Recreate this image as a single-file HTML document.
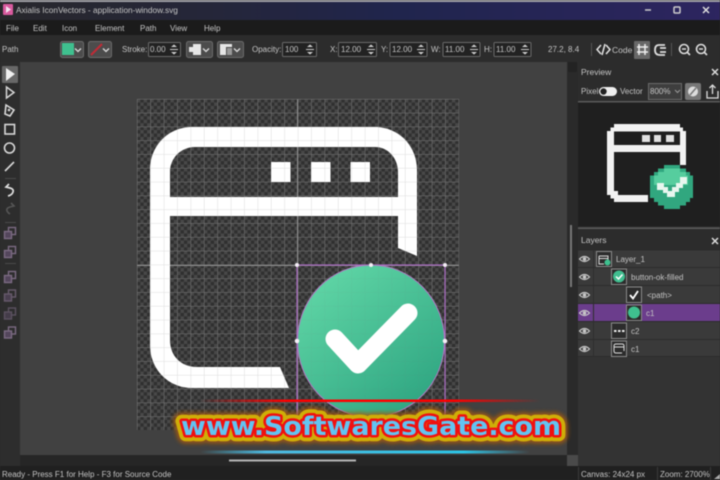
<!DOCTYPE html>
<html lang="en"><head><meta charset="utf-8"><title>Axialis IconVectors</title>
<style>
html,body{margin:0;padding:0;width:720px;height:480px;overflow:hidden;background:#2b2b2b}
svg{display:block;filter:blur(.5px)}
text{font-family:"Liberation Sans",sans-serif;font-size:8px;fill:#c4c4c4}
.sp{fill:#222;stroke:#6a6a6a;stroke-width:1}
.btn{fill:#4c4c4c;stroke:#6a6a6a}
.ic{fill:none;stroke:#d8d8d8;stroke-width:1.6}
.rowb{fill:#3a3a3a}
.sep{stroke:#555;stroke-width:1}
.th{fill:#2c2c2c;stroke:#8a8a8a}
</style></head><body>
<svg width="720" height="480" viewBox="0 0 720 480" xmlns="http://www.w3.org/2000/svg">
<defs>
<linearGradient id="tg" x1="0" x2="1" y1="0" y2="0"><stop offset="0" stop-color="#28282c"/><stop offset=".3" stop-color="#25263a"/><stop offset=".55" stop-color="#20254d"/><stop offset="1" stop-color="#2d2560"/></linearGradient>
<linearGradient id="cg" x1="0.15" y1="0.05" x2="0.85" y2="0.95"><stop offset="0" stop-color="#60d6a6"/><stop offset="1" stop-color="#2ea581"/></linearGradient>
<linearGradient id="redl" x1="0" x2="1" y1="0" y2="0"><stop offset="0" stop-color="#f00" stop-opacity="0"/><stop offset=".25" stop-color="#f00"/><stop offset=".75" stop-color="#f00"/><stop offset="1" stop-color="#f00" stop-opacity="0"/></linearGradient>
<linearGradient id="cyl" x1="0" x2="1" y1="0" y2="0"><stop offset="0" stop-color="#3bc4ea" stop-opacity="0"/><stop offset=".2" stop-color="#4fb9e0"/><stop offset=".8" stop-color="#2cc5e6"/><stop offset="1" stop-color="#3bc4ea" stop-opacity="0"/></linearGradient>
<pattern id="chk" x="137" y="99" width="6.7" height="6.9" patternUnits="userSpaceOnUse">
<rect width="6.7" height="6.9" fill="#303030"/><rect width="3.35" height="3.45" fill="#484848"/><rect x="3.35" y="3.45" width="3.35" height="3.45" fill="#484848"/></pattern>
<pattern id="grid" x="137" y="99" width="13.4" height="13.8" patternUnits="userSpaceOnUse">
<path d="M0 0H13.4M0 0V13.8" fill="none" stroke="#747474" stroke-width="1"/></pattern>
<g id="spin"><path d="M-3 -2.5L0 -5L3 -2.5ZM-3 2.5L0 5L3 2.5Z" fill="#d0d0d0"/><path d="M-4 0H4" stroke="#ccc"/></g>
<g id="eye"><path d="M-5 0Q0 -5 5 0Q0 5 -5 0Z" fill="none" stroke="#c8c8c8" stroke-width="1.2"/><circle r="1.8" fill="#c8c8c8"/></g>
<g id="overlap"><rect x="-1" y="-5" width="7" height="7" fill="none" stroke="#7b6a82" stroke-width="1.4"/><rect x="-5" y="-1" width="7" height="7" fill="#54465c" stroke="#7b6a82" stroke-width="1.4"/></g>
<g id="chev"><path d="M-3 -1.5L0 1.5L3 -1.5" fill="none" stroke="#ddd" stroke-width="1.3"/></g>
<filter id="glow" x="-5%" y="-40%" width="110%" height="180%"><feGaussianBlur stdDeviation="2"/></filter>
</defs>

<rect width="720" height="480" fill="#2b2b2b"/>
<!-- title -->
<rect width="720" height="2" fill="#a0a0a6"/>
<rect y="2" width="720" height="18" fill="url(#tg)"/>
<rect x="3" y="4" width="10" height="11" rx="1" fill="#d85a9e"/><path d="M6 6L11 9.5L6 13Z" fill="#f4e4f0"/>
<text x="16" y="13" style="font-size:8.3px">Axialis IconVectors - application-window.svg</text>
<path d="M645 10H651" stroke="#ccc" stroke-width="1.5"/>
<rect x="674" y="7" width="6" height="6" rx="1" fill="none" stroke="#ccc" stroke-width="1.5"/>
<path d="M703 7L709 13M709 7L703 13" stroke="#ddd" stroke-width="1.5"/>
<!-- menu -->
<rect y="20" width="720" height="15" fill="#1b1b1b"/>
<g style="fill:#b5b5b5">
<text x="6" y="31">File</text><text x="33" y="31">Edit</text><text x="62" y="31">Icon</text><text x="95" y="31">Element</text><text x="140" y="31">Path</text><text x="170" y="31">View</text><text x="204" y="31">Help</text>
</g>
<!-- toolbar -->
<rect y="35" width="720" height="27" fill="#2c2c2c"/>
<text x="2" y="52">Path</text>
<rect x="60.500" y="41.500" width="23" height="16" rx="2" class="btn"/><rect x="62" y="43" width="12" height="12" fill="#3fc08f"/><use href="#chev" x="78" y="50"/>
<rect x="88.500" y="41.500" width="23" height="16" rx="2" class="btn"/><path d="M91 55L102 44" stroke="#c22a35" stroke-width="2"/><use href="#chev" x="106" y="50"/>
<text x="122" y="52">Stroke:</text>
<rect x="148.500" y="42.500" width="32" height="14" rx="1" class="sp"/><text x="150" y="52">0.00</text><use href="#spin" x="174" y="49.500"/>
<rect x="186.500" y="41.500" width="26" height="16" rx="2" class="btn"/><path d="M189 47H193V52H189ZM193 44H201V55H193Z" fill="#e6e6e6"/><use href="#chev" x="206" y="50"/>
<rect x="217.500" y="41.500" width="26" height="16" rx="2" class="btn"/><path d="M220 44H232V47H226V55H220Z" fill="#e6e6e6"/><rect x="227" y="48" width="5" height="7" fill="#999"/><use href="#chev" x="237" y="50"/>
<text x="252" y="52">Opacity:</text>
<rect x="282.500" y="42.500" width="34" height="14" rx="1" class="sp"/><text x="285" y="52">100</text><use href="#spin" x="310" y="49.500"/>
<text x="330" y="52">X:</text>
<rect x="338.500" y="42.500" width="38" height="14" rx="1" class="sp"/><text x="341" y="52">12.00</text><use href="#spin" x="371" y="49.500"/>
<text x="381" y="52">Y:</text>
<rect x="390" y="42.500" width="37" height="14" rx="1" class="sp"/><text x="392" y="52">12.00</text><use href="#spin" x="421" y="49.500"/>
<text x="431" y="52">W:</text>
<rect x="443" y="42.500" width="37" height="14" rx="1" class="sp"/><text x="445" y="52">11.00</text><use href="#spin" x="474" y="49.500"/>
<text x="484" y="52">H:</text>
<rect x="494" y="42.500" width="37" height="14" rx="1" class="sp"/><text x="496" y="52">11.00</text><use href="#spin" x="525" y="49.500"/>
<text x="548" y="52">27.2, 8.4</text>
<path d="M591.500 43V56M671.500 43V56" class="sep"/>
<path d="M601 45L597 49.500L601 54M606 45L610 49.500L606 54M605 44L602 55" fill="none" stroke="#e4e4e4" stroke-width="1.5"/>
<text x="612" y="53" style="font-size:8.5px">Code</text>
<rect x="634" y="41" width="16" height="18" rx="1" fill="#686868"/>
<path d="M639 44V55M645 44V55M637 47H648M637 52H648" stroke="#eee" stroke-width="1.5"/>
<path d="M665 45H659Q655 45 655 50Q655 55 660 55H665M660 48H666M660 52H666" fill="none" stroke="#ddd" stroke-width="1.8"/>
<circle cx="684" cy="49" r="4.500" fill="none" stroke="#ddd" stroke-width="1.6"/><path d="M682 49H686M687.500 52.500L690 55" stroke="#ddd" stroke-width="1.6"/>
<circle cx="701" cy="49" r="4.500" fill="none" stroke="#ddd" stroke-width="1.6"/><path d="M699 49H703M704.500 52.500L707 55" stroke="#ddd" stroke-width="1.6"/>

<!-- left tools -->
<rect y="62" width="20" height="405" fill="#2d2d2d"/>
<rect x="2" y="66" width="16" height="17" rx="1" fill="#686868"/>
<path d="M6 68L15 74L6 81Z" fill="#f0f0f0"/>
<path d="M6.500 87L14 92.500L6.500 98Z" fill="none" stroke="#d8d8d8" stroke-width="1.5"/>
<path d="M6 105L14 110L10 116L5 114Z" class="ic"/><circle cx="9" cy="110" r="1.300" fill="#d8d8d8"/>
<rect x="5" y="124.500" width="9.500" height="9.500" class="ic"/>
<circle cx="9.500" cy="148" r="5" class="ic"/>
<path d="M5 171L14 162" class="ic"/>
<path d="M5 178.500H16" stroke="#4a4a4a"/>
<path d="M9 184L6 187L10 188Q14 189 13 192Q12 195 8 196" fill="none" stroke="#e0e0e0" stroke-width="1.7"/>
<path d="M11 203L14 206L10 207Q6 208 7 211Q8 213 10 214" fill="none" stroke="#555" stroke-width="1.6"/>
<path d="M5 222.500H16" stroke="#4a4a4a"/>
<use href="#overlap" x="9.500" y="232.500"/><use href="#overlap" x="9.500" y="251.500"/>
<path d="M5 263.500H16" stroke="#4a4a4a"/>
<use href="#overlap" x="9.500" y="276.500"/><g opacity=".75"><use href="#overlap" x="9.500" y="295"/></g><g opacity=".6"><use href="#overlap" x="9.500" y="313"/></g><use href="#overlap" x="9.500" y="332"/>

<!-- canvas -->
<rect x="20" y="62" width="547" height="393" fill="#414141"/>
<rect x="567" y="62" width="11" height="405" fill="#2a2a2a"/>
<rect x="568" y="62" width="9" height="10" fill="#232323"/>
<rect x="570" y="225" width="2" height="62" fill="#777"/>
<rect x="567" y="455" width="11" height="11" fill="#4a4a4a"/>
<rect x="137" y="99" width="322" height="331" fill="url(#chk)"/>
<rect x="137" y="99" width="322" height="331" fill="url(#grid)"/>
<path d="M297.500 99V430M137 265.500H459" stroke="#8e8e8e"/>
<path fill="#fff" fill-rule="evenodd" d="M192 127H375C399 127 417 146 417 170V256L398 248V216H170V340C170 356 181 367 197 367H280L289 388H192C168 388 150 369 150 345V170C150 146 168 127 192 127ZM170 197H398V172C398 158 388 147 375 147H195C181 147 170 158 170 172Z"/>
<rect x="271" y="162" width="19.500" height="20" fill="#fff"/><rect x="311" y="162" width="19.500" height="20" fill="#fff"/><rect x="350.500" y="162" width="19.500" height="20" fill="#fff"/>
<rect x="137" y="99" width="322" height="331" fill="url(#grid)" opacity=".25"/>
<ellipse cx="371" cy="341" rx="73.500" ry="76" fill="url(#cg)"/>
<rect x="297" y="265" width="148" height="152" fill="url(#grid)" opacity=".1"/>
<path d="M335 339L358 364L408 313" fill="none" stroke="#fff" stroke-width="19" stroke-linecap="round" stroke-linejoin="round"/>
<rect x="297" y="265" width="148" height="165" fill="none" stroke="#a868c0" stroke-width="1.200"/>
<ellipse cx="371" cy="341" rx="73.500" ry="76" fill="none" stroke="#b07ac4" stroke-width="1"/>
<g fill="#f4eef6"><circle cx="297" cy="265" r="2"/><circle cx="371" cy="265" r="2"/><circle cx="445" cy="265" r="2"/><circle cx="297" cy="341" r="2.300"/><circle cx="445" cy="341" r="2.300"/></g>

<!-- scroll strip -->
<rect x="20" y="455" width="547" height="11" fill="#262626"/>
<rect x="229" y="459.500" width="127" height="2" fill="#b4b4b4"/>

<!-- preview panel -->
<rect x="578" y="62" width="142" height="405" fill="#333"/>
<rect x="578" y="62" width="142" height="40" fill="#2c2c2c"/>
<text x="581" y="75" style="font-size:8.5px">Preview</text>
<path d="M712 69L718 75M718 69L712 75" stroke="#ddd" stroke-width="1.5"/>
<text x="581" y="94">Pixel</text>
<rect x="599" y="87" width="18" height="9" rx="4.500" fill="#eee"/><circle cx="603.500" cy="91.500" r="3.200" fill="#222"/>
<text x="620" y="94">Vector</text>
<rect x="648.500" y="83.500" width="33" height="16" fill="#3e3e3e" stroke="#6a6a6a"/><text x="650" y="94" fill="#ccc">800%</text><path d="M675 90L677.500 92.500L680 90" fill="none" stroke="#999"/>
<rect x="685" y="83" width="16" height="17" rx="2" fill="#777"/><circle cx="693" cy="91.500" r="5" fill="#ddd"/><path d="M690 95L696 88" stroke="#777" stroke-width="1.500"/>
<path d="M707 91V98H718V91M712.500 94V85M709.500 88L712.500 85L715.500 88" fill="none" stroke="#ddd" stroke-width="1.300"/>
<rect x="578" y="101" width="142" height="1.500" fill="#5a5a5a"/>
<rect x="578" y="102.500" width="142" height="124" fill="#1f1f1f"/>
<g shape-rendering="crispEdges">
<path fill="#f2f2f2" d="M614 124H680V127.500H683V131H686V165H680V152H614V191H618V195H648V202H614V198.500H610.500V195H607V131H610.500V127.500H614ZM614 131.500V145H680V131.500Z" fill-rule="evenodd"/>
<rect x="642" y="135" width="8" height="7" fill="#e0e0e0"/><rect x="654" y="135" width="7" height="7" fill="#e0e0e0"/><rect x="666" y="135" width="8" height="7" fill="#e0e0e0"/>
<path fill="#31a77f" d="M664 165H680V168.500H686V172H690V175.500H693V198H690V202H686V205.500H680V209H664V205.500H658V202H654V198H650V175.500H654V172H658V168.500H664Z"/>
<path fill="#56cd9e" d="M664 168.500H680V172H686V175.500H688V185H654V175.500H658V172H664Z"/>
<path fill="#e8f6ef" d="M657 183H664V187H668V191H672V187H676V183H680V177H687V184H683V188H679V192H675V197H667V193H663V190H657Z"/>
</g>
<rect x="578" y="227.500" width="142" height="1.500" fill="#5a5a5a"/>

<!-- layers -->
<rect x="578" y="229" width="142" height="21" fill="#2c2c2c"/>
<text x="581" y="243" style="font-size:8.500px">Layers</text>
<path d="M712 238L718 244M718 238L712 244" stroke="#ddd" stroke-width="1.500"/>
<rect x="578" y="250" width="142" height="107" class="rowb"/>
<rect x="578" y="304" width="142" height="18" fill="#6b3d8c"/>
<path d="M578 267.500H720M578 285.500H720M578 303.500H720M578 321.500H720M578 339.500H720M578 356.500H720M578 250H720" stroke="#2c2c2c"/>
<path d="M593.500 250V357" stroke="#2e2e2e"/>
<use href="#eye" x="584.500" y="259"/><use href="#eye" x="584.500" y="277"/><use href="#eye" x="584.500" y="295"/><use href="#eye" x="584.500" y="313"/><use href="#eye" x="584.500" y="331"/><use href="#eye" x="584.500" y="349"/>
<rect x="596.500" y="251.500" width="15" height="15" class="th"/><path d="M599 256H608V263M599 256V264H604M599 258.500H608" fill="none" stroke="#ddd"/><circle cx="607.500" cy="262.500" r="3" fill="#3fc08f"/>
<text x="616" y="262">Layer_1</text>
<rect x="611.500" y="269" width="15" height="15.500" class="th"/><circle cx="619" cy="276.500" r="6" fill="#40bd8f"/><path d="M616 276.500L618.500 279L622.500 274.500" fill="none" stroke="#fff" stroke-width="1.500"/>
<text x="631" y="280">button-ok-filled</text>
<rect x="626.500" y="287" width="15" height="15.500" class="th"/><path d="M630 295L633 298.500L638 291" fill="none" stroke="#fff" stroke-width="1.800"/>
<text x="647" y="298">&lt;path&gt;</text>
<rect x="626.500" y="305" width="15" height="15.500" class="th"/><circle cx="634" cy="312.500" r="6" fill="#3fc08f"/>
<text x="646" y="316">c1</text>
<rect x="611.500" y="323" width="15" height="15.500" class="th"/><path d="M614 331h2.500M618 331h2.500M622 331h2.500" stroke="#eee" stroke-width="2"/>
<text x="631" y="334">c2</text>
<rect x="611.500" y="341" width="15" height="15.500" class="th"/><path d="M622 353H616Q614 353 614 351V346Q614 344 616 344H622Q624 344 624 346V351M614 347H624" fill="none" stroke="#ddd"/>
<text x="631" y="352">c1</text>

<!-- status -->
<rect y="466" width="720" height="14" fill="#202020"/>
<path d="M578.500 467V480M657.500 467V480M710.500 467V480" stroke="#3a3a3a"/>
<text x="2" y="477">Ready - Press F1 for Help - F3 for Source Code</text>
<text x="581" y="477">Canvas: 24x24 px</text>
<text x="660" y="477">Zoom: 2700%</text>
<path d="M714 479H720V474Z" fill="#aaa"/>

<!-- watermark -->
<rect x="200" y="399.500" width="340" height="2.500" fill="url(#redl)"/>
<rect x="200" y="450.500" width="330" height="3" fill="url(#cyl)"/>
<g stroke-linejoin="round">
<text x="181" y="435" textLength="380" lengthAdjust="spacingAndGlyphs" filter="url(#glow)" style="font:bold 26px 'DejaVu Sans',sans-serif;fill:#a85a10;stroke:#a85a10;stroke-width:17;opacity:.85">www.SoftwaresGate.com</text>
<text x="181" y="435" textLength="380" lengthAdjust="spacingAndGlyphs" style="font:bold 26px 'DejaVu Sans',sans-serif;fill:#cfae08;stroke:#cfae08;stroke-width:12.5">www.SoftwaresGate.com</text>
<text x="181" y="435" textLength="380" lengthAdjust="spacingAndGlyphs" style="font:bold 26px 'DejaVu Sans',sans-serif;fill:#f01010;stroke:#f01010;stroke-width:5">www.SoftwaresGate.com</text>
<text x="181" y="435" textLength="380" lengthAdjust="spacingAndGlyphs" style="font:bold 26px 'DejaVu Sans',sans-serif;fill:#62c4f2">www.SoftwaresGate.com</text>
</g>
</svg>
</body></html>
